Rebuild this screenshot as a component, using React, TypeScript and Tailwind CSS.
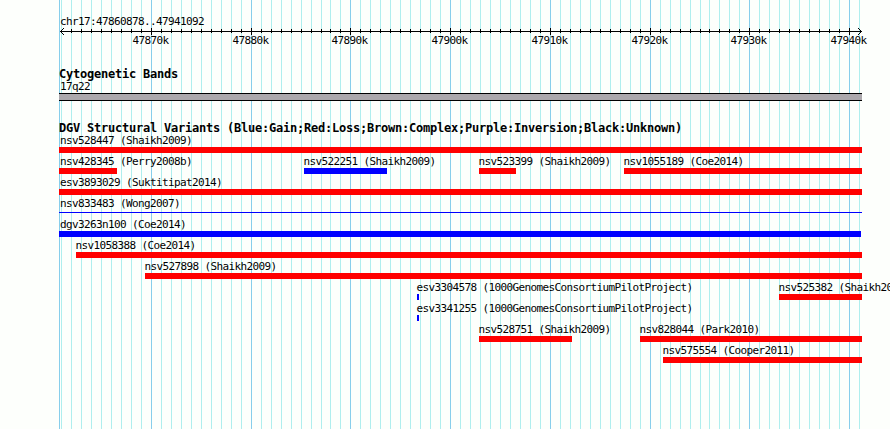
import { clsx } from "clsx";

const LEFT = 59;
const RIGHT = 862;
const STEP = 9.9733;
const FIRST_TICK = 61.715;

interface Feature {
  name: string;
  start: number;
  end: number;
  color: string;
}

const gain = (name: string, start: number, end: number): Feature => ({ name, start, end, color: "bg-[#0000ff]" });
const loss = (name: string, start: number, end: number): Feature => ({ name, start, end, color: "bg-[#ff0000]" });

const ROWS: Feature[][] = [
  [loss("nsv528447 (Shaikh2009)", 59, 862)],
  [
    loss("nsv428345 (Perry2008b)", 59, 117),
    gain("nsv522251 (Shaikh2009)", 304, 387),
    loss("nsv523399 (Shaikh2009)", 479, 516),
    loss("nsv1055189 (Coe2014)", 624, 862),
  ],
  [loss("esv3893029 (Suktitipat2014)", 59, 862)],
  [gain("nsv833483 (Wong2007)", 59, 862)],
  [gain("dgv3263n100 (Coe2014)", 59, 861)],
  [loss("nsv1058388 (Coe2014)", 76, 862)],
  [loss("nsv527898 (Shaikh2009)", 145, 862)],
  [
    gain("esv3304578 (1000GenomesConsortiumPilotProject)", 417, 419),
    loss("nsv525382 (Shaikh2009)", 779, 862),
  ],
  [gain("esv3341255 (1000GenomesConsortiumPilotProject)", 417, 419)],
  [loss("nsv528751 (Shaikh2009)", 479, 572), loss("nsv828044 (Park2010)", 640, 862)],
  [loss("nsv575554 (Cooper2011)", 663, 862)],
];

// variants drawn as a hairline instead of a full bar
const THIN = new Set(["nsv833483 (Wong2007)"]);

const TICKS = Array.from({ length: 81 }, (_, i) => ({
  x: Math.floor(FIRST_TICK + i * STEP),
  major: i % 10 === 9,
  label: `${47861 + i}k`,
})).filter((t) => t.x < RIGHT);

const SMALL = "text-[11px] leading-[12px] tracking-[-0.622px] whitespace-nowrap";
const HEADING = "text-[12px] leading-[12px] font-bold tracking-[-0.224px] whitespace-nowrap";

function GridLines() {
  return (
    <svg className="absolute inset-0" width="890" height="429" shapeRendering="crispEdges">
      <rect x={LEFT} y="0" width="1" height="429" fill="#87ceeb" />
      {TICKS.map((t) => (
        <rect key={t.x} x={t.x} y="0" width="1" height="429" fill={t.major ? "#87ceeb" : "#afeeee"} />
      ))}
    </svg>
  );
}

function Ruler() {
  return (
    <svg className="block" width="890" height="21" shapeRendering="crispEdges">
      <rect x="60" y="4" width="802" height="1" />
      {TICKS.filter((t) => t.x > 62 && t.x < 859).map((t) => (
        <rect key={t.x} x={t.x} y={t.major ? 1 : 2} width="1" height={t.major ? 7 : 4} />
      ))}
      {[1, 2, 3].map((d) => (
        <g key={d}>
          <rect x={60 + d} y={4 - d} width="1" height="1" />
          <rect x={60 + d} y={4 + d} width="1" height="1" />
          <rect x={861 - d} y={4 - d} width="1" height="1" />
          <rect x={861 - d} y={4 + d} width="1" height="1" />
        </g>
      ))}
      {TICKS.filter((t) => t.major).map((t) => (
        <text key={t.label} x={t.x - 18.5} y="17" className="text-[11px] tracking-[-0.622px]">
          {t.label}
        </text>
      ))}
    </svg>
  );
}

function TrackRow({ features }: { features: Feature[] }) {
  return (
    <div className="flex h-[21px]">
      {features.map((f, i) => {
        const prev = i === 0 ? 0 : features[i - 1].end;
        return (
          <div key={f.name} className="shrink-0" style={{ marginLeft: f.start - prev, width: f.end - f.start }}>
            <div className={clsx(SMALL, "h-[12px]", f.start === LEFT ? "ml-px" : "-ml-[0.5px]")}>{f.name}</div>
            <div className={clsx(f.color, THIN.has(f.name) ? "mt-[2px] h-px" : "h-[6px]")} />
          </div>
        );
      })}
    </div>
  );
}

export default function App() {
  return (
    <div className="relative h-[429px] w-[890px] overflow-hidden bg-[#fdfffc] font-['DejaVu_Sans_Mono',monospace] text-black">
      <GridLines />
      <div className="relative flex flex-col">
        <div className={clsx(SMALL, "h-[27px] pt-[16px] pl-[60px]")}>chr17:47860878..47941092</div>
        <Ruler />
        <section className="h-[74px] pt-[20px]">
          <h2 className={clsx(HEADING, "h-[13px] pl-[59px]")}>Cytogenetic Bands</h2>
          <div className={clsx(SMALL, "h-[12px] pl-[60px]")}>17q22</div>
          <div className="ml-[59px] h-[8px] w-[803px] border-y border-black bg-[#aca8ac]" />
        </section>
        <section>
          <h2 className={clsx(HEADING, "h-[13px] pl-[59px]")}>
            DGV Structural Variants (Blue:Gain;Red:Loss;Brown:Complex;Purple:Inversion;Black:Unknown)
          </h2>
          {ROWS.map((features) => (
            <TrackRow key={features[0].name} features={features} />
          ))}
        </section>
      </div>
    </div>
  );
}
